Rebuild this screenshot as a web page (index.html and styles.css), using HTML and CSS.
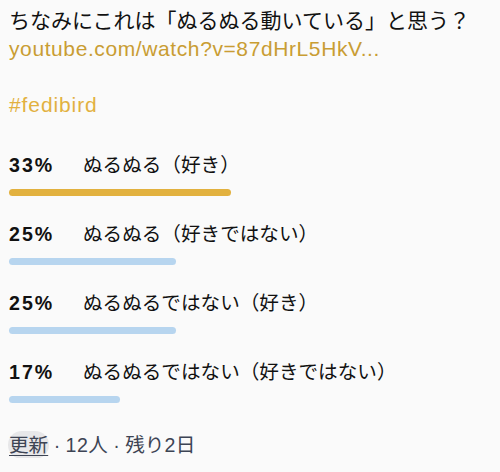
FILE: index.html
```html
<!DOCTYPE html>
<html lang="ja">
<head>
<meta charset="utf-8">
<title>poll</title>
<link rel="stylesheet" href="styles.css">
</head>
<body>
<div class="status">
  <p class="content">ちなみにこれは「ぬるぬる動いている」と思う？<br><a class="link" href="#">youtube.com/watch?v=87dHrL5HkV...</a></p>
  <p class="content tag-line"><a class="tag" href="#">#fedibird</a></p>
  <div class="poll">
    <ul class="poll-list">
      <li class="poll-item">
        <div class="option"><span class="number">33%</span><span class="option-text">ぬるぬる（好き）</span></div>
        <span class="chart leading" style="width:222px"></span>
      </li>
      <li class="poll-item">
        <div class="option"><span class="number">25%</span><span class="option-text">ぬるぬる（好きではない）</span></div>
        <span class="chart" style="width:167px"></span>
      </li>
      <li class="poll-item">
        <div class="option"><span class="number">25%</span><span class="option-text">ぬるぬるではない（好き）</span></div>
        <span class="chart" style="width:167px"></span>
      </li>
      <li class="poll-item">
        <div class="option"><span class="number">17%</span><span class="option-text">ぬるぬるではない（好きではない）</span></div>
        <span class="chart" style="width:111px"></span>
      </li>
    </ul>
    <div class="footer"><span class="refresh">更新</span> · <span class="latin">12</span>人 · 残り<span class="latin">2</span>日</div>
  </div>
</div>
</body>
</html>
```
FILE: styles.css
```css
html, body {
  margin: 0;
  padding: 0;
  background: #fafafa;
}
body {
  font-family: "Liberation Sans", "Noto Sans CJK JP", sans-serif;
  color: #111111;
}
.status {
  padding: 7px 9px 0 9px;
}
.content {
  margin: 0;
  font-size: 21px;
  line-height: 28px;
}
.tag-line {
  margin-top: 28px;
}
.link {
  color: #c99d33;
  text-decoration: none;
  letter-spacing: 0.6px;
}
.tag {
  color: #e2b13f;
  text-decoration: none;
  letter-spacing: 0.9px;
}
.poll {
  margin-top: 33.5px;
}
.poll-list {
  list-style: none;
  margin: 0;
  padding: 0;
}
.poll-item {
  margin: 0 0 26.3px 0;
}
.option {
  display: flex;
  font-size: 19.6px;
  line-height: 25px;
  margin-bottom: 11px;
}
.number {
  flex: 0 0 74px;
  font-weight: 700;
  letter-spacing: 2px;
}
.option-text {
  flex: 1 1 auto;
}
.chart {
  display: block;
  height: 7px;
  border-radius: 4px;
  background: #b7d5ef;
}
.chart.leading {
  background: #e2b13f;
}
.footer {
  padding-top: 3.2px;
  font-size: 19.6px;
  line-height: 25px;
  color: #3d4454;
}
.latin {
  letter-spacing: 0.4px;
}
.refresh {
  display: inline-block;
  text-decoration: underline;
  text-underline-offset: 3px;
  padding: 2px 1px;
  margin: -2px -1px;
  border-radius: 14px / 14px;
  background: #e7e7e9;
  line-height: 24px;
}
```
